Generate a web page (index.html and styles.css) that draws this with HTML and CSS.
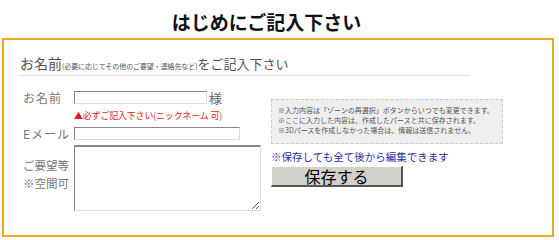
FILE: index.html
```html
<html>
<head>
<meta charset="utf-8">
<link rel="stylesheet" href="styles.css">
</head>
<body>
<h1 class="Title">はじめにご記入下さい</h1>
<article class="Box">
<header class="Lead">
<span class="big">お名前</span><span class="tiny">(必要に応じてその他のご要望・連絡先など)</span><span class="mid">をご記入下さい</span>
</header>
<form class="Entry">
<div class="Fields">
<div class="Row">
<label class="Label">お名前</label>
<input type="text" class="name" /><span class="sama">様</span>
</div>
<p class="Must">▲必ずご記入下さい(ニックネーム 可)</p>
<div class="Row">
<label class="Label">Eメール</label>
<input type="text" class="mail" />
</div>
<div class="Row wish">
<label class="Label">ご要望等<br />※空間可</label>
<textarea></textarea>
</div>
</div>
<div class="Side">
<div class="Notes">
※入力内容は「ゾーンの再選択」ボタンからいつでも変更できます。<br />
※ここに入力した内容は、作成したパースと共に保存されます。<br />
※3Dパースを作成しなかった場合は、情報は送信されません。
</div>
<p class="Hint">※保存しても全て後から編集できます</p>
<button type="button" class="Save">保存する</button>
</div>
</form>
</article>
</body>
</html>
```
FILE: styles.css
```css
body {
    margin: 0;
    background-color: #fff;
    font-family: "Noto Sans CJK JP", "Liberation Sans", sans-serif;
    color: #666;
}
p {
    margin: 0;
}
.Title {
    margin: 0;
    padding: 8px 26px 0 0;
    height: 30px;
    font-size: 19px;
    line-height: 28px;
    font-weight: bold;
    color: #111;
    text-align: center;
}
.Box {
    display: block;
    margin: 0 5px 0 2px;
    height: 181px;
    padding: 14px 0 0 16px;
    border: 2px #f0a823 solid;
}
.Lead {
    width: 449px;
    height: 21px;
    line-height: 18px;
    border-bottom: 1px #c8c8c8 dotted;
    color: #555;
    white-space: nowrap;
}
.Lead .big {
    font-size: 14px;
}
.Lead .tiny {
    font-size: 7px;
    letter-spacing: -0.1px;
}
.Lead .mid {
    font-size: 13px;
}
.Entry {
    display: flex;
    margin: 14px 0 0;
}
.Fields {
    width: 248px;
    flex-shrink: 0;
    padding-left: 3px;
}
.Row {
    display: flex;
    align-items: center;
    height: 15px;
    font-size: 12px;
    line-height: 15px;
}
.Label {
    flex-shrink: 0;
    width: 51px;
    line-height: 15px;
    letter-spacing: 1px;
    white-space: nowrap;
    color: #777;
}
input {
    height: 13px;
    padding: 0;
    margin: 0;
    border: 1px #ddd solid;
    border-top-color: #888;
    border-left-color: #888;
    font-size: 11px;
}
input.name {
    width: 133px;
}
input.mail {
    width: 166px;
}
.sama {
    margin-left: 2px;
    font-size: 13px;
    line-height: 15px;
    color: #666;
}
.Must {
    margin: 5px 0 5px 51px;
    height: 11px;
    font-size: 9px;
    line-height: 11px;
    letter-spacing: -0.2px;
    white-space: nowrap;
    color: #e8191f;
}
.wish {
    height: auto;
    margin-top: 4px;
    align-items: flex-start;
}
.wish .Label {
    padding-top: 11px;
    font-size: 11.5px;
    line-height: 18px;
    letter-spacing: 0;
}
textarea {
    width: 187px;
    height: 66px;
    margin: 0;
    padding: 0;
    border: 1px #ddd solid;
    border-top: 2px #888 solid;
    border-left-color: #888;
    resize: both;
}
.Side {
    padding-top: 9px;
}
.Notes {
    width: 224px;
    height: 38px;
    padding: 5px 0 0 6px;
    font-size: 7px;
    line-height: 10px;
    color: #555;
    background-color: #eee;
    border: 1px #ccc dashed;
    white-space: nowrap;
}
.Hint {
    margin: 6px 0 3px;
    font-size: 10.5px;
    line-height: 13px;
    color: #2b2ba8;
    white-space: nowrap;
}
.Save {
    display: block;
    width: 132px;
    height: 21px;
    padding: 0;
    font-family: "Noto Sans CJK JP", sans-serif;
    font-size: 16px;
    line-height: 17px;
    color: #000;
    background-color: #d4d0c8;
    border: 1px #fff solid;
    border-right: 2px #555 solid;
    border-bottom: 2px #555 solid;
}
```
